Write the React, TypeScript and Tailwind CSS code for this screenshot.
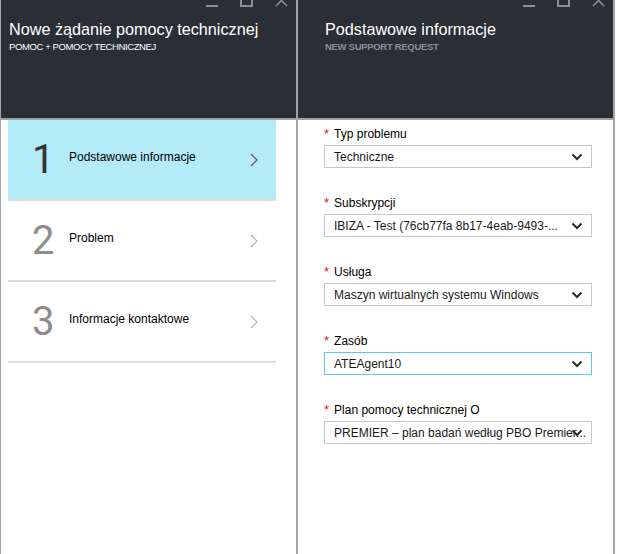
import React from 'react';

const FONT = { fontFamily: '"Liberation Sans", Arial, sans-serif' };

function WindowControls() {
  return (
    <div className="absolute -top-[5px] right-[8px] flex items-start gap-[22px]">
      <div className="mt-[10px] h-[2px] w-[12px] bg-[#8b9096]" />
      <div className="h-[12px] w-[13px] border-2 border-[#8b9096]" />
      <svg width="13" height="12" viewBox="0 0 13 12">
        <path d="M1 0 L12 11 M12 0 L1 11" stroke="#8b9096" strokeWidth="1.6" fill="none" />
      </svg>
    </div>
  );
}

function Chevron({ color }: { color: string }) {
  return (
    <svg width="10" height="16" viewBox="0 0 10 16">
      <path d="M2 2 L8 8 L2 14" stroke={color} strokeWidth="1.2" fill="none" />
    </svg>
  );
}

function DropChevron() {
  return (
    <svg width="12" height="8" viewBox="0 0 12 8">
      <path d="M1.5 1.5 L6 6 L10.5 1.5" stroke="#2b2b2b" strokeWidth="2" fill="none" />
    </svg>
  );
}

const steps = [
  { n: '1', label: 'Podstawowe informacje', active: true },
  { n: '2', label: 'Problem', active: false },
  { n: '3', label: 'Informacje kontaktowe', active: false },
];

const fields = [
  { label: 'Typ problemu', value: 'Techniczne', focus: false },
  { label: 'Subskrypcji', value: 'IBIZA - Test (76cb77fa 8b17-4eab-9493-...', focus: false },
  { label: 'Usługa', value: 'Maszyn wirtualnych systemu Windows', focus: false },
  { label: 'Zasób', value: 'ATEAgent10', focus: true },
  { label: 'Plan pomocy technicznej O', value: 'PREMIER – plan badań według PBO Premier...', focus: false },
];

export default function App() {
  return (
    <div className="flex h-[554px] w-[617px] overflow-hidden bg-white" style={FONT}>
      {/* left blade */}
      <section className="flex w-[298px] shrink-0 flex-col border-l border-r-2 border-[#a3a3a3]">
        <header className="relative h-[120px] shrink-0 border-b-2 border-[#9ea2a6] bg-[#2a2f35] px-[8px] pt-[19px]">
          <WindowControls />
          <h1 className="text-[16.2px] leading-[20px] text-white">Nowe żądanie pomocy technicznej</h1>
          <p className="mt-[2px] text-[9.5px] leading-[11px] tracking-[-0.4px] text-white">POMOC + POMOCY TECHNICZNEJ</p>
        </header>
        <div className="pl-[7px] pr-[20px]">
          {steps.map((s) => (
            <div
              key={s.n}
              className={`flex h-[81px] items-center border-b-2 border-[#dcdcdc] pl-[24px] pr-[17px] ${s.active ? 'bg-[#b4ebf9]' : 'bg-white'}`}
            >
              <span
                className={`w-[37px] text-[40px] leading-none ${s.active ? 'text-[#333]' : 'text-[#8d8d8d]'}`}
                style={{ fontFamily: 'Roboto, sans-serif', fontWeight: 400 }}
              >
                {s.n}
              </span>
              <span className="-mt-[6px] flex-1 text-[12px] text-black">{s.label}</span>
              <Chevron color={s.active ? '#555' : '#b0b0b0'} />
            </div>
          ))}
        </div>
      </section>

      {/* right blade */}
      <section className="flex w-[317px] shrink-0 flex-col border-r-2 border-[#a3a3a3]">
        <header className="relative h-[120px] shrink-0 border-b-2 border-[#9ea2a6] bg-[#2a2f35] pl-[27px] pt-[19px]">
          <WindowControls />
          <h2 className="text-[16.2px] leading-[20px] text-white">Podstawowe informacje</h2>
          <p className="mt-[2px] text-[9.5px] font-bold leading-[11px] tracking-[-0.3px] text-[#8a8f95]">NEW SUPPORT REQUEST</p>
        </header>
        <div className="flex flex-col gap-[28px] pl-[26px] pr-[21px] pt-[7px]">
          {fields.map((f) => (
            <div key={f.label} className="flex flex-col">
              <label className="flex h-[14px] items-start text-[12px] leading-[14px] text-black">
                <span className="mr-[5px] text-[13px] text-[#e8112d]">*</span>
                {f.label}
              </label>
              <div
                className={`relative mt-[4px] flex h-[23px] items-center overflow-hidden border pl-[9px] pr-[2px] ${f.focus ? 'border-[#5ec8ea]' : 'border-[#c9c9c9]'}`}
              >
                <span className="whitespace-nowrap text-[12px] text-[#1a1a1a]">{f.value}</span>
                <span className="absolute right-[8px] top-[7px]">
                  <DropChevron />
                </span>
              </div>
            </div>
          ))}
        </div>
      </section>
    </div>
  );
}
